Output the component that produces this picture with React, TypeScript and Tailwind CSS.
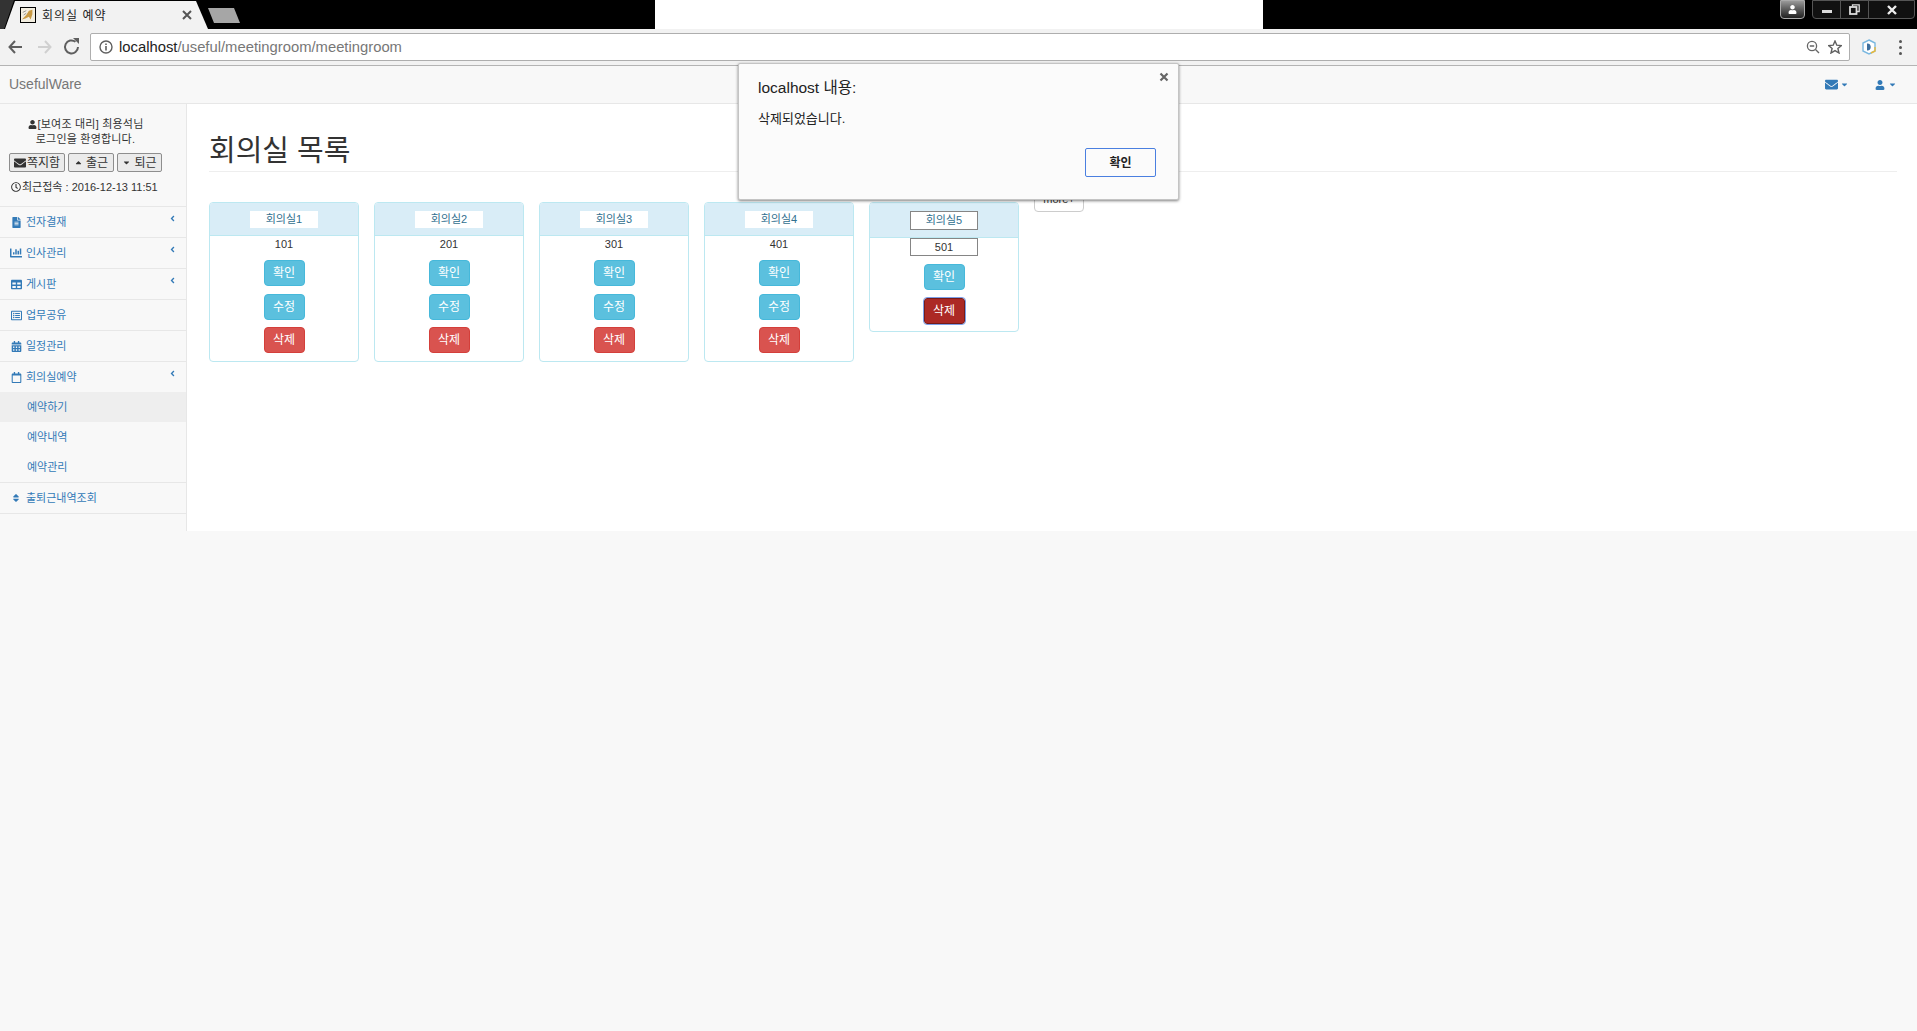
import React from "react";
import {
  FaAngleLeft,
  FaCalendarAlt,
  FaCaretDown,
  FaCaretUp,
  FaChartBar,
  FaEnvelope,
  FaFileAlt,
  FaRegCalendar,
  FaRegClock,
  FaRegListAlt,
  FaSort,
  FaTable,
  FaUser,
} from "react-icons/fa";

const rooms = [
  { name: "회의실1", no: "101" },
  { name: "회의실2", no: "201" },
  { name: "회의실3", no: "301" },
  { name: "회의실4", no: "401" },
];

const menu = [
  { label: "전자결재", icon: <FaFileAlt size={11} />, arrow: true },
  { label: "인사관리", icon: <FaChartBar size={12} />, arrow: true },
  { label: "게시판", icon: <FaTable size={11} />, arrow: true },
  { label: "업무공유", icon: <FaRegListAlt size={11} />, arrow: false },
  { label: "일정관리", icon: <FaCalendarAlt size={11} />, arrow: false },
];

const btnInfo =
  "w-[41px] rounded-[4px] border border-[#46b8da] bg-[#5bc0de] text-center text-[12px] text-white";

function Chrome() {
  return (
    <>
      {/* Title bar and tab */}
      <div className="relative flex h-[29px] bg-black">
        <svg width="250" height="29" className="shrink-0">
          <path d="M0 29 L0 0 L14 0 L4 29 Z" fill="#333" />
          <path d="M5 29 L15 1 L196 1 L208 29 Z" fill="#f2f2f2" />
          <path d="M208 8 L234 8 L240 23 L214 23 Z" fill="#a6a6a6" />
        </svg>
        <div className="absolute left-[20px] top-[7px] h-[16px] w-[16px] border border-black bg-[#f3eee0]">
          <svg viewBox="0 0 16 16" className="h-full w-full">
            <path d="M1 13 L6 8 L9 3 L13 2 L13 7 L11 13 L9 10 L5 12 Z" fill="#c99a45" />
            <path d="M2 5 L6 3 M3 8 L6 6" stroke="#8a8a8a" strokeWidth="1" />
          </svg>
        </div>
        <span className="absolute left-[42px] top-[7px] text-[12px] tracking-[1px] text-[#222]">회의실 예약</span>
        <svg width="10" height="10" viewBox="0 0 10 10" className="absolute left-[182px] top-[10px]">
          <path d="M1 1 L9 9 M9 1 L1 9" stroke="#555" strokeWidth="2" />
        </svg>
        <div className="ml-[405px] h-[29px] w-[608px] bg-white" />
        <div className="ml-auto flex h-[19px] items-start pr-[2px]">
          <div className="mr-[7px] flex h-[19px] w-[25px] items-center justify-center rounded-b-[4px] border border-[#aaa] bg-gradient-to-b from-[#999] to-[#222]">
            <FaUser size={9} className="text-white" />
          </div>
          <div className="flex h-[19px] w-[103px] rounded-b-[4px] border border-[#555] bg-[#111]">
            <div className="flex w-[28px] items-center justify-center border-r border-[#555]">
              <div className="mt-[3px] h-[3px] w-[10px] bg-[#ddd]" />
            </div>
            <div className="flex w-[28px] items-center justify-center border-r border-[#555]">
              <svg width="11" height="11" viewBox="0 0 11 11">
                <path d="M3.5 2.5 L3.5 .8 L10.2 .8 L10.2 7.5 L8 7.5" fill="none" stroke="#ddd" strokeWidth="1.3" />
                <rect x="1" y="3" width="6.5" height="7" fill="none" stroke="#ddd" strokeWidth="1.8" />
              </svg>
            </div>
            <div className="flex flex-1 items-center justify-center">
              <svg width="10" height="10" viewBox="0 0 10 10">
                <path d="M1 1 L9 9 M9 1 L1 9" stroke="#eee" strokeWidth="2.4" />
              </svg>
            </div>
          </div>
        </div>
      </div>

      {/* Toolbar */}
      <div className="flex h-[37px] items-center border-b border-[#b4b4b4] bg-[#f2f2f2]">
        <svg width="90" height="36" viewBox="0 0 90 36" className="shrink-0">
          <path d="M22 18 L10 18 M15 12 L9.5 18 L15 24" fill="none" stroke="#5f5f5f" strokeWidth="2" />
          <path d="M38 18 L50 18 M45 12 L50.5 18 L45 24" fill="none" stroke="#d0d0d0" strokeWidth="2" />
          <path d="M78 18 A6.5 6.5 0 1 1 75.5 12.8" fill="none" stroke="#5f5f5f" strokeWidth="2" />
          <path d="M73 9 L79 9 L79 15 Z" fill="#5f5f5f" />
        </svg>
        <div className="flex h-[28px] w-[1760px] shrink-0 items-center rounded-[2px] border border-[#aeaeae] bg-white pl-[8px] pr-[7px]">
          <svg width="14" height="14" viewBox="0 0 14 14" className="shrink-0">
            <circle cx="7" cy="7" r="6" fill="none" stroke="#5f5f5f" strokeWidth="1.4" />
            <path d="M7 6 L7 10.5 M7 3.5 L7 5" stroke="#5f5f5f" strokeWidth="1.6" />
          </svg>
          <span className="ml-[6px] text-[14.8px] text-[#777]">
            <span className="text-[#222]">localhost</span>/useful/meetingroom/meetingroom
          </span>
          <svg width="14" height="14" viewBox="0 0 14 14" className="ml-auto">
            <circle cx="6" cy="6" r="4.6" fill="none" stroke="#666" strokeWidth="1.3" />
            <path d="M3.8 6 L8.2 6 M9.5 9.5 L13 13" stroke="#666" strokeWidth="1.4" />
          </svg>
          <svg width="14" height="14" viewBox="0 0 14 14" className="ml-[8px]">
            <path d="M7 1 L8.8 5.2 L13.3 5.6 L9.9 8.5 L11 13 L7 10.6 L3 13 L4.1 8.5 L.7 5.6 L5.2 5.2 Z" fill="none" stroke="#5f5f5f" strokeWidth="1.4" />
          </svg>
        </div>
        <svg width="16" height="16" viewBox="0 0 16 16" className="ml-[11px]">
          <path d="M8 1 L14 4 L14 12 L8 15 L2 12 L2 4 Z" fill="#fff" stroke="#7ab8e0" strokeWidth="1.4" />
          <path d="M6 4.5 L6 11.5 C11 12 11 4 6 4.5 Z" fill="#3d6f9e" />
          <path d="M14 8 L14 12 L10 14" fill="none" stroke="#e8b93c" strokeWidth="1.4" />
        </svg>
        <div className="ml-[22px] flex flex-col gap-[3px]">
          <span className="h-[3px] w-[3px] rounded-full bg-[#555]" />
          <span className="h-[3px] w-[3px] rounded-full bg-[#555]" />
          <span className="h-[3px] w-[3px] rounded-full bg-[#555]" />
        </div>
      </div>
    </>
  );
}

function Sidebar() {
  return (
    <aside className="w-[186px] shrink-0 text-[12px]">
      <div className="h-[103px] border-b border-[#e7e7e7] pt-[13px] text-[#333]">
        <div className="flex h-[15px] items-center justify-center pr-[15px] leading-[15px]">
          <FaUser size={9} className="mr-[1px]" />
          <span className="text-[11px] tracking-[0.2px]">[보여조 대리] 최용석님</span>
        </div>
        <div className="h-[15px] pr-[15px] text-center text-[11px] leading-[15px] tracking-[0.2px]">로그인을 환영합니다.</div>
        <div className="mt-[6px] flex gap-[3px] pl-[9px]">
          <SideBtn w="w-[56px]" icon={<FaEnvelope size={12} className="mr-[1px]" />} label="쪽지함" />
          <SideBtn w="w-[46px]" icon={<FaCaretUp size={9} className="mr-[3px]" />} label="출근" />
          <SideBtn w="w-[45px]" icon={<FaCaretDown size={9} className="mr-[3px]" />} label="퇴근" />
        </div>
        <div className="mt-[7px] flex items-center pl-[11px] text-[11px]">
          <FaRegClock size={10} className="mr-[1px]" />
          <span>최근접속 : 2016-12-13 11:51</span>
        </div>
      </div>

      <nav className="text-[#337ab7]">
        {menu.map((m) => (
          <MenuRow key={m.label} label={m.label} icon={m.icon} arrow={m.arrow} />
        ))}
        <div className="border-b border-[#e7e7e7]">
          <MenuInner label="회의실예약" icon={<FaRegCalendar size={11} />} arrow />
          <div className="flex h-[30px] items-center bg-[#eeeeee] pl-[27px] text-[11px]">예약하기</div>
          <div className="flex h-[30px] items-center pl-[27px] text-[11px]">예약내역</div>
          <div className="flex h-[30px] items-center pl-[27px] text-[11px]">예약관리</div>
        </div>
        <MenuRow label="출퇴근내역조회" icon={<FaSort size={10} />} arrow={false} />
      </nav>
    </aside>
  );
}

function SideBtn({ w, icon, label }: { w: string; icon: React.ReactNode; label: string }) {
  return (
    <div className={`flex h-[19px] ${w} items-center justify-center rounded-[2px] border border-[#8e8e8e] bg-[#ebebeb] text-[12px] text-[#333]`}>
      {icon}
      {label}
    </div>
  );
}

function MenuInner({ label, icon, arrow }: { label: string; icon: React.ReactNode; arrow: boolean }) {
  return (
    <div className="flex h-[30px] items-center text-[11px]">
      <span className="flex w-[26px] justify-center pl-[6px]">{icon}</span>
      <span className="pt-[1px]">{label}</span>
      {arrow && <FaAngleLeft size={9} className="ml-auto mb-[8px] mr-[9px]" />}
    </div>
  );
}

function MenuRow(props: { label: string; icon: React.ReactNode; arrow: boolean }) {
  return (
    <div className="border-b border-[#e7e7e7]">
      <MenuInner {...props} />
    </div>
  );
}

function RoomCard({ name, no }: { name: string; no: string }) {
  return (
    <div className="w-[150px] shrink-0 rounded-[4px] border border-[#bce8f1] bg-white">
      <div className="flex h-[33px] items-center justify-center rounded-t-[3px] border-b border-[#bce8f1] bg-[#d9edf7]">
        <div className="h-[17px] w-[68px] bg-white text-center text-[11px] leading-[16px] text-[#31708f]">{name}</div>
      </div>
      <div className="flex flex-col items-center pb-[8px]">
        <div className="h-[17px] text-[11px] leading-[17px] text-[#333]">{no}</div>
        <div className={`${btnInfo} mt-[7px] h-[26px] leading-[25px]`}>확인</div>
        <div className={`${btnInfo} mt-[8px] h-[26px] leading-[25px]`}>수정</div>
        <div className="mt-[7px] h-[26px] w-[41px] rounded-[4px] border border-[#d43f3a] bg-[#d9534f] text-center text-[12px] leading-[25px] text-white">삭제</div>
      </div>
    </div>
  );
}

function EditingCard() {
  return (
    <div className="w-[150px] shrink-0 rounded-[4px] border border-[#bce8f1] bg-white">
      <div className="flex h-[35px] items-center justify-center rounded-t-[3px] border-b border-[#bce8f1] bg-[#d9edf7]">
        <div className="h-[19px] w-[68px] border border-[#858585] bg-white text-center text-[11px] leading-[16px] text-[#31708f]">회의실5</div>
      </div>
      <div className="flex flex-col items-center pb-[7px]">
        <div className="h-[18px] w-[68px] border border-[#858585] text-center text-[11px] leading-[16px] text-[#333]">501</div>
        <div className="mt-[8px] flex flex-col items-center gap-[8px]">
          <div className={`${btnInfo} h-[26px] leading-[25px]`}>확인</div>
          <div className="h-[26px] w-[41px] rounded-[3px] border border-[#761c19] bg-[#ac2925] text-center text-[12px] leading-[24px] text-white outline outline-1 outline-[#7d9ee8]">삭제</div>
        </div>
      </div>
    </div>
  );
}

function AlertDialog() {
  return (
    <div className="absolute left-[738px] top-[63px] h-[137px] w-[441px] rounded-[2px] border border-[#c4c4c4] bg-[#fbfbfb] shadow-[0_1px_3px_rgba(0,0,0,0.5)]">
      <svg width="10" height="10" viewBox="0 0 10 10" className="absolute right-[9px] top-[8px]">
        <path d="M1.5 1.5 L8.5 8.5 M8.5 1.5 L1.5 8.5" stroke="#666" strokeWidth="2.2" />
      </svg>
      <div className="ml-[19px] mt-[14px] text-[15.5px] leading-[20px] text-[#222]">localhost 내용:</div>
      <div className="ml-[19px] mt-[13px] text-[13px] leading-[16px] text-[#222]">삭제되었습니다.</div>
      <div className="absolute bottom-[22px] right-[22px] flex h-[29px] w-[71px] items-center justify-center rounded-[2px] border border-[#4a7fe0] bg-[#fbfbfb] text-[12px] font-bold text-[#222]">확인</div>
    </div>
  );
}

export default function App() {
  return (
    <div className="relative flex h-[1031px] flex-col overflow-hidden bg-[#f8f8f8] font-['Liberation_Sans','Noto_Sans_CJK_KR',sans-serif]">
      <Chrome />

      <div className="flex h-[38px] shrink-0 items-center border-b border-[#e7e7e7] bg-[#f8f8f8] pl-[9px] pr-[10px]">
        <span className="text-[14px] text-[#777]">UsefulWare</span>
        <div className="ml-auto flex items-center text-[#337ab7]">
          <FaEnvelope size={13} />
          <FaCaretDown size={9} className="ml-[2px]" />
          <FaUser size={10} className="ml-[26px]" />
          <FaCaretDown size={9} className="ml-[3px] mr-[10px]" />
        </div>
      </div>

      <div className="flex h-[427px] shrink-0">
        <Sidebar />
        <main className="flex-1 border-l border-[#e7e7e7] bg-white pl-[22px] pr-[20px]">
          <h1 className="border-b border-[#eeeeee] pb-[4px] pt-[31px] text-[29px] font-normal leading-[32px] text-[#333]">회의실 목록</h1>
          <div className="mt-[30px] flex items-start gap-[15px]">
            {rooms.map((r) => (
              <RoomCard key={r.name} name={r.name} no={r.no} />
            ))}
            <EditingCard />
            <div className="-mt-[16px] h-[26px] w-[50px] rounded-[4px] border border-[#ccc] bg-white text-center text-[11px] leading-[24px] text-[#333]">more+</div>
          </div>
        </main>
      </div>

      <AlertDialog />
    </div>
  );
}
